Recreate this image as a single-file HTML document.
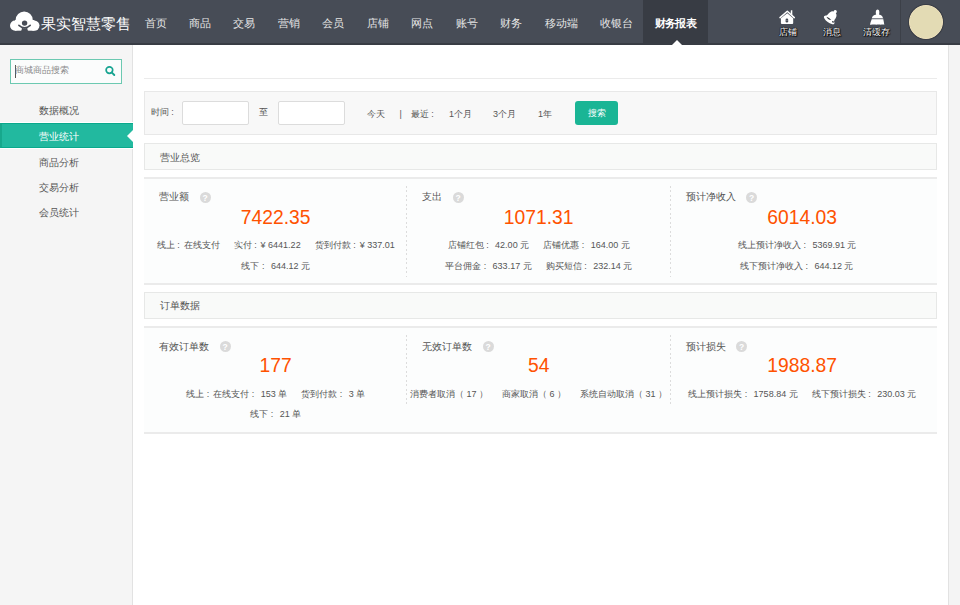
<!DOCTYPE html>
<html><head><meta charset="utf-8">
<style>
*{margin:0;padding:0;box-sizing:border-box;}
html,body{width:960px;height:605px;overflow:hidden;background:#fff;font-family:"Liberation Sans",sans-serif;color:#555;}
.abs{position:absolute;}
#hdr{position:absolute;left:0;top:0;width:960px;height:45px;background:#474c56;border-bottom:2px solid #383c44;}
#logo{position:absolute;left:9.5px;top:10.5px;}
#title{position:absolute;left:41px;top:14.8px;font-size:15px;color:#fff;line-height:18px;white-space:nowrap;}
.nav{position:absolute;top:0;height:43px;line-height:46px;font-size:10.5px;color:#e6e6e6;white-space:nowrap;}
.nav.act{background:#383c44;color:#fff;font-weight:bold;letter-spacing:-0.6px;}
#tri{position:absolute;left:671.5px;top:39.5px;width:0;height:0;border-left:5px solid transparent;border-right:5px solid transparent;border-bottom:5.5px solid #fff;}
.hic{position:absolute;top:27.3px;font-size:9px;color:#fff;line-height:10px;white-space:nowrap;text-shadow:0 0 1px #000,0 0 1px #000,0 0 1px #000,1px 1px 1px #000;}
#sep{position:absolute;left:900px;top:0;width:1px;height:43px;background:#3c4048;}
#avatar{position:absolute;left:908.5px;top:4.5px;width:34.5px;height:34.5px;border-radius:50%;background:#e3dbb4;border:1px solid #f0e2bd;box-shadow:0 0 0 1px #3a3e46;}
#side{position:absolute;left:0;top:45px;width:133px;height:560px;background:#f5f5f5;border-right:1px solid #e2e2e2;}
#search{position:absolute;left:10px;top:59px;width:112px;height:25px;border:1.5px solid #6cc9b1;background:#fbfcfc;}
#search .ph{position:absolute;left:3.5px;top:5px;font-size:9px;color:#8a8a8a;line-height:11px;white-space:nowrap;}
#search .cur{position:absolute;left:4px;top:4.5px;width:1px;height:13px;background:#555;}
.menu{position:absolute;left:39px;font-size:9.75px;color:#555;line-height:12px;white-space:nowrap;}
#act{position:absolute;left:0;top:123px;width:133px;height:25px;background:#22b99f;border-top:1px solid #0aa98c;border-bottom:1px solid #0aa98c;border-left:2px solid #17a88c;box-shadow:0 -1px 0 #fff,0 1px 0 #fff;}
#notch{position:absolute;left:127px;top:130px;width:0;height:0;border-top:6px solid transparent;border-bottom:6px solid transparent;border-right:6px solid #fff;}
#rside{position:absolute;left:948px;top:45px;width:12px;height:560px;background:#f4f4f4;border-left:1px solid #e2e2e2;}
#hline{position:absolute;left:144px;top:78px;width:793px;height:1px;background:#ebebeb;}
.box{position:absolute;left:144px;width:793px;background:#f8f8f8;border:1px solid #e8e8e8;}
.t9{position:absolute;font-size:9px;line-height:11px;color:#555;white-space:nowrap;}
.inp{position:absolute;top:101px;width:67px;height:24px;background:#fff;border:1px solid #dcdcdc;border-radius:2px;}
#btn{position:absolute;left:575px;top:101px;width:43px;height:24px;background:#1ab595;border-radius:3px;color:#fff;font-size:9px;line-height:24px;text-align:center;}
.shd{position:absolute;left:144px;width:793px;height:27px;background:#f9faf9;border:1px solid #e7e8e7;}
.shd span{position:absolute;left:15px;top:7.5px;font-size:10.25px;line-height:12px;color:#555;white-space:nowrap;}
.sec{position:absolute;left:144px;width:793px;background:#fcfdfd;border-top:2px solid #ebebeb;border-bottom:2px solid #ebebeb;}
.col{position:absolute;width:263.3px;text-align:center;}
.col .dot{position:absolute;left:-0.8px;width:1px;background:repeating-linear-gradient(to bottom,#dcdcdc 0,#dcdcdc 2px,transparent 2px,transparent 4.5px);}
.ttl{position:absolute;left:15px;font-size:10.25px;line-height:12px;color:#555;white-space:nowrap;text-align:left;}
.q{display:inline-block;width:11px;height:11px;border-radius:50%;background:#dadada;color:#fff;font-size:8.5px;line-height:12.5px;text-align:center;font-weight:bold;vertical-align:top;margin-left:10.5px;margin-top:0.5px;}
.num{position:absolute;left:0;width:100%;font-size:19.3px;line-height:22px;color:#ff5200;white-space:nowrap;}
.det{position:absolute;left:0;width:100%;font-size:9px;line-height:11px;color:#555;white-space:nowrap;}
.det span{margin:0 7px;}
.c{font-style:normal;display:inline-block;width:1.12em;margin-left:-.12em;}
.c2{font-style:normal;display:inline-block;padding-left:.25em;}
</style></head><body>
<div id="hdr"></div>
<svg id="logo" width="31" height="22" viewBox="0 0 31 22">
<g fill="#fff"><circle cx="5.1" cy="14.6" r="5.1"/><circle cx="24.3" cy="14.6" r="5.2"/><circle cx="14.2" cy="9.2" r="8.6"/><rect x="5" y="9" width="19.3" height="10.7"/></g>
<circle cx="14.6" cy="12.1" r="2.7" fill="#474c56"/>
<path d="M8.9 14.3 Q14.6 19.3 20.2 14.4" stroke="#474c56" stroke-width="1.6" fill="none" stroke-linecap="round"/>
<path d="M10.2 20.2 Q11.6 20 11.7 18.4 L11.9 16.8 Q14.6 17.9 17.3 16.8 L17.5 18.4 Q17.6 20 19 20.2 Z" fill="#474c56"/>
</svg>
<div id="title">果实智慧零售</div>
<div class="nav" style="left:133.5px;padding:0 11.25px;">首页</div>
<div class="nav" style="left:177.5px;padding:0 11.25px;">商品</div>
<div class="nav" style="left:222px;padding:0 11.25px;">交易</div>
<div class="nav" style="left:266.5px;padding:0 11.25px;">营销</div>
<div class="nav" style="left:311px;padding:0 11.25px;">会员</div>
<div class="nav" style="left:355.5px;padding:0 11.25px;">店铺</div>
<div class="nav" style="left:400px;padding:0 11.25px;">网点</div>
<div class="nav" style="left:444.5px;padding:0 11.25px;">账号</div>
<div class="nav" style="left:489px;padding:0 11.25px;">财务</div>
<div class="nav" style="left:533.5px;padding:0 11.25px;">移动端</div>
<div class="nav" style="left:589px;padding:0 11.25px;">收银台</div>
<div class="nav act" style="left:643px;width:65px;padding-left:11.5px;">财务报表</div>
<div id="tri"></div>

<svg class="abs" style="left:774px;top:6px;" width="26" height="22" viewBox="0 0 26 22">
<path d="M6 11.6 L13.3 5.2 L20.3 11.6" stroke="#fff" stroke-width="1.5" fill="none" stroke-linejoin="round" stroke-linecap="round"/>
<path d="M16.6 7.6 L16.9 4.3 L18.3 4.3 L18.3 9.2 Z" fill="#fff"/>
<path d="M6.9 12.2 L13.3 7.3 L19.2 12.2 L19.2 17 Q19.2 17.9 18.3 17.9 L7.8 17.9 Q6.9 17.9 6.9 17 Z" fill="#fff"/>
<rect x="11.6" y="12.6" width="2.6" height="3.9" rx="1.2" fill="#474c56"/>
<rect x="11.9" y="14.3" width="2" height="0.5" fill="#9a9ea6"/>
</svg>
<div class="hic" style="left:779px;">店铺</div>
<svg class="abs" style="left:818.8px;top:5px;" width="26" height="22" viewBox="0 0 26 22">
<g transform="translate(12.6 11.6) rotate(36) scale(0.95) translate(-8 -8)">
<circle cx="8" cy="1.6" r="1.7" fill="#fff"/>
<path d="M8 2.2 C11.6 2.2 12.4 5.4 12.5 8 C12.6 10 13.2 11 14.4 12 L1.6 12 C2.8 11 3.4 10 3.5 8 C3.6 5.4 4.4 2.2 8 2.2 Z" fill="#fff"/>
<ellipse cx="8" cy="12.4" rx="6.6" ry="2.6" fill="#fff"/>
<path d="M3.8 11.4 Q6.8 10.2 9.8 11.2 Q6.5 13.2 3.8 11.4 Z" fill="#2a2e35"/>
<ellipse cx="12.4" cy="11.6" rx="1" ry="0.8" fill="#2a2e35"/>
</g>
</svg>
<div class="hic" style="left:822.5px;">消息</div>
<svg class="abs" style="left:864px;top:6px;" width="26" height="22" viewBox="0 0 26 22">
<path d="M12.2 8.6 C11.4 6.8 11.8 3.6 13.6 3.6 C15.4 3.6 15.8 6.8 15 8.6 C17.4 9.1 18.6 10.2 19 12.3 L7.9 12.3 C8.3 10.2 9.6 9.1 12.2 8.6 Z" fill="#fff"/>
<rect x="7.8" y="12.3" width="11.5" height="1" fill="#8d9199"/>
<path d="M7.7 13.3 L19.3 13.3 C19.7 15.4 20 17 20.3 18.7 C18.6 18.2 17.2 18.9 15.6 18.6 C14 18.3 12.6 18.9 11 18.6 C9.4 18.3 8 18.9 6 18.7 C6.4 17 6.9 15.4 7.7 13.3 Z" fill="#fff"/>
</svg>
<div class="hic" style="left:862.5px;">清缓存</div>
<div id="sep"></div>
<div id="avatar"></div>

<div id="side"></div>
<div id="search"><div class="cur"></div><div class="ph">商城商品搜索</div>
<svg class="abs" style="left:93px;top:4px;" width="13" height="13" viewBox="0 0 13 13"><circle cx="5.4" cy="6.1" r="3.3" stroke="#17a491" stroke-width="1.7" fill="none"/><path d="M7.9 8.6 L10.3 11" stroke="#17a491" stroke-width="1.9" stroke-linecap="round"/></svg>
</div>
<div class="menu" style="top:105px;">数据概况</div>
<div id="act"></div><div id="notch"></div>
<div class="menu" style="top:131px;color:#fff;">营业统计</div>
<div class="menu" style="top:157px;">商品分析</div>
<div class="menu" style="top:182px;">交易分析</div>
<div class="menu" style="top:207px;">会员统计</div>
<div id="rside"></div>

<div id="hline"></div>
<div class="box" style="top:91px;height:44px;"></div>
<div class="t9" style="left:151px;top:107px;">时间<i class="c2">:</i></div>
<div class="inp" style="left:182px;"></div>
<div class="t9" style="left:259px;top:107px;">至</div>
<div class="inp" style="left:278px;"></div>
<div class="t9" style="left:367px;top:108.8px;">今天</div>
<div class="t9" style="left:399.5px;top:108.8px;">|</div>
<div class="t9" style="left:411px;top:108.8px;">最近<i class="c2">:</i></div>
<div class="t9" style="left:449px;top:108.8px;">1个月</div>
<div class="t9" style="left:493px;top:108.8px;">3个月</div>
<div class="t9" style="left:538px;top:108.8px;">1年</div>
<div id="btn">搜索</div>

<div class="shd" style="top:143px;"><span>营业总览</span></div>
<div class="sec" style="top:177px;height:108px;">
 <div class="col" style="left:0;top:0;height:104px;">
  <div class="ttl" style="top:12.3px;">营业额<span class="q">?</span></div>
  <div class="num" style="top:27.5px;">7422.35</div>
  <div class="det" style="top:61px;"><span>线上<i class="c">:</i>在线支付</span><span>实付<i class="c">:</i>¥ 6441.22</span><span>货到付款<i class="c">:</i>¥ 337.01</span></div>
  <div class="det" style="top:82px;"><span>线下<i class="c">:</i> 644.12 元</span></div>
 </div>
 <div class="col" style="left:263px;top:0;height:104px;">
  <div class="dot" style="top:7px;height:91px;"></div>
  <div class="ttl" style="top:12.3px;">支出<span class="q">?</span></div>
  <div class="num" style="top:27.5px;">1071.31</div>
  <div class="det" style="top:61px;"><span>店铺红包<i class="c">:</i> 42.00 元</span><span>店铺优惠<i class="c">:</i> 164.00 元</span></div>
  <div class="det" style="top:82px;"><span>平台佣金<i class="c">:</i> 633.17 元</span><span>购买短信<i class="c">:</i> 232.14 元</span></div>
 </div>
 <div class="col" style="left:526.5px;top:0;height:104px;">
  <div class="dot" style="top:7px;height:91px;"></div>
  <div class="ttl" style="top:12.3px;">预计净收入<span class="q">?</span></div>
  <div class="num" style="top:27.5px;">6014.03</div>
  <div class="det" style="top:61px;left:-5px;"><span>线上预计净收入<i class="c">:</i> 5369.91 元</span></div>
  <div class="det" style="top:82px;left:-5.5px;"><span>线下预计净收入<i class="c">:</i> 644.12 元</span></div>
 </div>
</div>

<div class="shd" style="top:292px;"><span style="top:6.7px;">订单数据</span></div>
<div class="sec" style="top:326px;height:108px;">
 <div class="col" style="left:0;top:0;height:104px;">
  <div class="ttl" style="top:12.5px;">有效订单数<span class="q">?</span></div>
  <div class="num" style="top:27px;">177</div>
  <div class="det" style="top:61px;"><span>线上<i class="c">:</i>在线支付<i class="c">:</i> 153 单</span><span>货到付款<i class="c">:</i> 3 单</span></div>
  <div class="det" style="top:81px;"><span>线下<i class="c">:</i> 21 单</span></div>
 </div>
 <div class="col" style="left:263px;top:0;height:104px;">
  <div class="dot" style="top:7px;height:71px;"></div>
  <div class="ttl" style="top:12.5px;">无效订单数<span class="q">?</span></div>
  <div class="num" style="top:27px;">54</div>
  <div class="det" style="top:61px;left:-4px;"><span>消费者取消（ 17 ）</span><span>商家取消（ 6 ）</span><span>系统自动取消（ 31 ）</span></div>
 </div>
 <div class="col" style="left:526.5px;top:0;height:104px;">
  <div class="dot" style="top:7px;height:71px;"></div>
  <div class="ttl" style="top:12.5px;">预计损失<span class="q">?</span></div>
  <div class="num" style="top:27px;">1988.87</div>
  <div class="det" style="top:61px;"><span>线上预计损失<i class="c">:</i> 1758.84 元</span><span>线下预计损失<i class="c">:</i> 230.03 元</span></div>
 </div>
</div>
</body></html>
